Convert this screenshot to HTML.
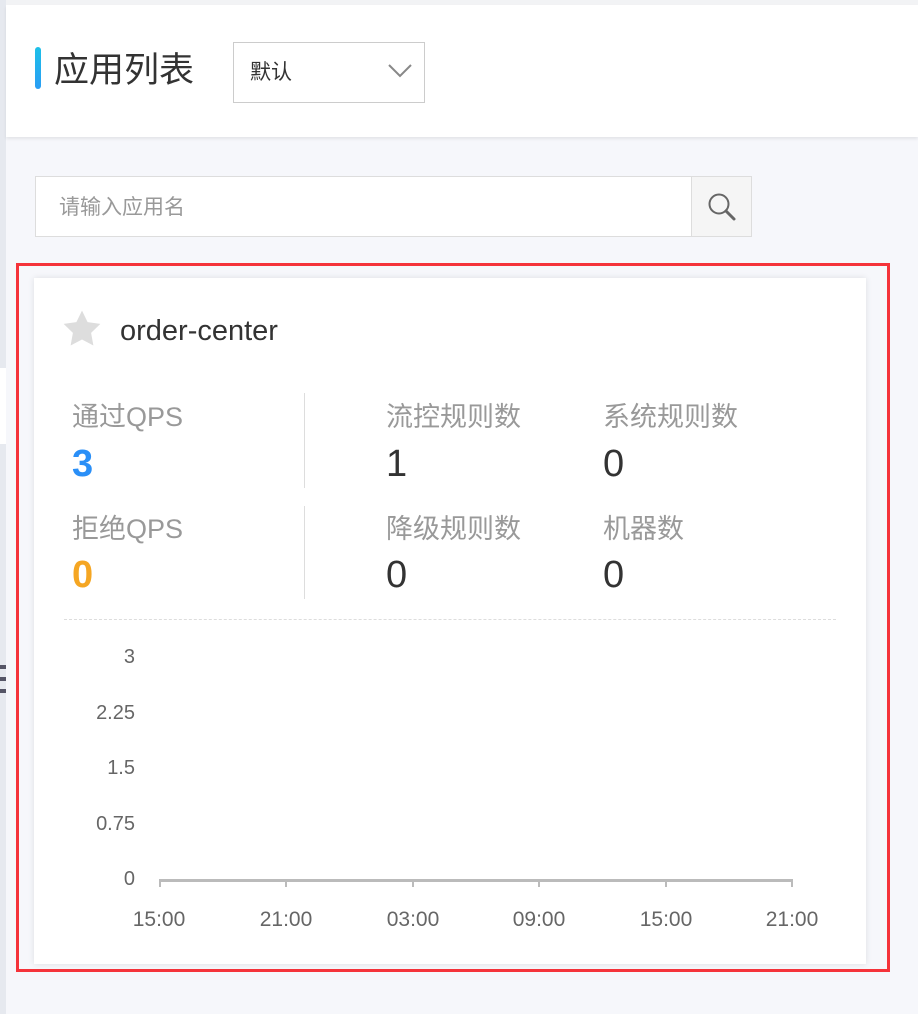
<!DOCTYPE html>
<html><head><meta charset="utf-8"><style>
*{margin:0;padding:0;box-sizing:border-box}
body{width:918px;height:1014px;background:#f6f7fb;position:relative;overflow:hidden;font-family:"Liberation Sans","Noto Sans CJK SC",sans-serif}
.a{position:absolute}
.lbl{font-size:27px;color:#999;white-space:nowrap}
.val{font-size:38px;color:#333;white-space:nowrap}
.yl{font-size:20px;color:#666;text-align:right;width:60px;left:75px}
.xl{font-size:21px;color:#666;width:80px;text-align:center}
.tick{width:2px;height:8px;background:#bbb;top:879px}
</style></head><body>
<div class="a" style="left:0;top:0;width:918px;height:6px;background:#f2f3f5"></div>
<div class="a" style="left:0;top:0;width:6px;height:1014px;background:#e6e9ef"></div>
<div class="a" style="left:0;top:368px;width:6px;height:76px;background:#fff"></div>
<div class="a" style="left:0;top:665px;width:6px;height:4px;background:#556"></div>
<div class="a" style="left:0;top:677px;width:6px;height:4px;background:#556"></div>
<div class="a" style="left:0;top:689px;width:6px;height:4px;background:#556"></div>
<div class="a" style="left:6px;top:5px;width:912px;height:132px;background:#fff;box-shadow:0 2px 3px rgba(0,0,0,0.08)"></div>
<div class="a" style="left:35px;top:47px;width:6px;height:42px;border-radius:3px;background:linear-gradient(#1cc0e8,#2a9df4)"></div>
<div class="a" style="left:54px;top:50px;font-size:35px;color:#333;line-height:42px">应用列表</div>
<div class="a" style="left:233px;top:42px;width:192px;height:61px;border:1px solid #ccc;background:#fff"></div>
<div class="a" style="left:250px;top:60px;font-size:21px;color:#333;line-height:26px">默认</div>
<svg class="a" style="left:387px;top:61px" width="26" height="18"><path d="M2 4 L13 15 L24 4" fill="none" stroke="#888" stroke-width="2"/></svg>
<div class="a" style="left:35px;top:176px;width:717px;height:61px;border:1px solid #ddd;background:#fff"></div>
<div class="a" style="left:691px;top:176px;width:61px;height:61px;border:1px solid #ddd;background:#f5f5f5"></div>
<svg class="a" style="left:705px;top:190px" width="34" height="34"><circle cx="14" cy="14" r="9.5" fill="none" stroke="#666" stroke-width="2"/><path d="M21 21 L29 29" stroke="#666" stroke-width="3" stroke-linecap="round"/></svg>
<div class="a" style="left:59px;top:195px;font-size:21px;color:#999;line-height:26px">请输入应用名</div>
<div class="a" style="left:16px;top:263px;width:874px;height:709px;border:3px solid #f5333a"></div>
<div class="a" style="left:34px;top:278px;width:832px;height:686px;background:#fff;box-shadow:0 0 6px rgba(0,0,0,0.1)"></div>
<svg class="a" style="left:60px;top:308px" width="44" height="42" viewBox="0 0 24 24"><path d="M12 1.5l3.2 6.6 7.3 1-5.3 5.1 1.3 7.2L12 18l-6.5 3.4 1.3-7.2L1.5 9.1l7.3-1z" fill="#ddd"/></svg>
<div class="a" style="left:120px;top:313px;font-size:29px;color:#333;line-height:36px">order-center</div>
<div class="a" style="left:304px;top:393px;width:1px;height:95px;background:#ddd"></div>
<div class="a" style="left:304px;top:506px;width:1px;height:93px;background:#ddd"></div>
<div class="a lbl" style="left:72px;top:395px">通过QPS</div>
<div class="a val" style="left:72px;top:443px;color:#2a8ff7;font-weight:bold">3</div>
<div class="a lbl" style="left:72px;top:507px">拒绝QPS</div>
<div class="a val" style="left:72px;top:554px;color:#f5a623;font-weight:bold">0</div>
<div class="a lbl" style="left:386px;top:395px">流控规则数</div>
<div class="a val" style="left:386px;top:443px">1</div>
<div class="a lbl" style="left:603px;top:395px">系统规则数</div>
<div class="a val" style="left:603px;top:443px">0</div>
<div class="a lbl" style="left:386px;top:507px">降级规则数</div>
<div class="a val" style="left:386px;top:554px">0</div>
<div class="a lbl" style="left:603px;top:507px">机器数</div>
<div class="a val" style="left:603px;top:554px">0</div>
<div class="a" style="left:64px;top:619px;width:772px;border-top:1px dashed #ddd"></div>
<div class="a yl" style="top:646px">3</div>
<div class="a yl" style="top:702px">2.25</div>
<div class="a yl" style="top:757px">1.5</div>
<div class="a yl" style="top:813px">0.75</div>
<div class="a yl" style="top:868px">0</div>
<div class="a" style="left:159px;top:879px;width:634px;height:3px;background:#bbb"></div>
<div class="a tick" style="left:159px"></div><div class="a tick" style="left:285px"></div><div class="a tick" style="left:412px"></div><div class="a tick" style="left:538px"></div><div class="a tick" style="left:665px"></div><div class="a tick" style="left:791px"></div>
<div class="a xl" style="left:119px;top:908px">15:00</div>
<div class="a xl" style="left:246px;top:908px">21:00</div>
<div class="a xl" style="left:373px;top:908px">03:00</div>
<div class="a xl" style="left:499px;top:908px">09:00</div>
<div class="a xl" style="left:626px;top:908px">15:00</div>
<div class="a xl" style="left:752px;top:908px">21:00</div>
</body></html>
